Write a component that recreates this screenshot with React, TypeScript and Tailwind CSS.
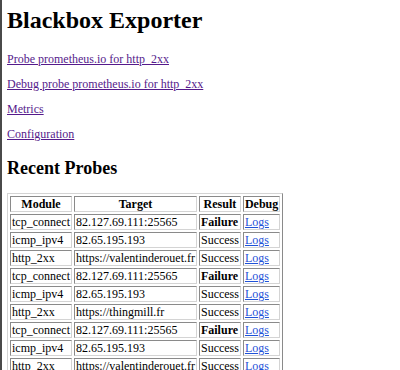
const probes = [
  { module: "tcp_connect", target: "82.127.69.111:25565", ok: false },
  { module: "icmp_ipv4", target: "82.65.195.193", ok: true },
  { module: "http_2xx", target: "https://valentinderouet.fr", ok: true },
  { module: "tcp_connect", target: "82.127.69.111:25565", ok: false },
  { module: "icmp_ipv4", target: "82.65.195.193", ok: true },
  { module: "http_2xx", target: "https://thingmill.fr", ok: true },
  { module: "tcp_connect", target: "82.127.69.111:25565", ok: false },
  { module: "icmp_ipv4", target: "82.65.195.193", ok: true },
  { module: "http_2xx", target: "https://valentinderouet.fr", ok: true },
  { module: "tcp_connect", target: "82.127.69.111:25565", ok: false },
];

const links = [
  "Probe prometheus.io for http_2xx",
  "Debug probe prometheus.io for http_2xx",
  "Metrics",
  "Configuration",
];

const cell =
  "border border-t-[#8a8a8a] border-l-[#8a8a8a] border-b-[#d4d4d4] border-r-[#d4d4d4] px-[1px] py-0 h-[16px] whitespace-nowrap";

export default function App() {
  return (
    <div
      className="min-h-[370px] border-l-2 border-[#4a4a4a] bg-white pl-[5px] text-[12px] leading-[14px] text-black"
      style={{ fontFamily: '"Liberation Serif", "Times New Roman", serif' }}
    >
      {/* Header */}
      <h1 className="pt-[6px] text-[24px] font-bold leading-[28px]">Blackbox Exporter</h1>

      {/* Links */}
      <div className="mt-[18px] flex flex-col gap-[11px]">
        {links.map((l) => (
          <p key={l} className="h-[14px]">
            <a href="#" className="text-[#551a8b] underline">
              {l}
            </a>
          </p>
        ))}
      </div>

      {/* Recent probes */}
      <h2 className="mt-[17px] text-[18px] font-bold leading-[21px]">Recent Probes</h2>

      <table className="mt-[14px] border-separate border-spacing-[2px] border border-t-[#d4d4d4] border-l-[#d4d4d4] border-b-[#8a8a8a] border-r-[#8a8a8a]">
        <thead>
          <tr>
            <th className={cell + " font-bold text-center"}>Module</th>
            <th className={cell + " font-bold text-center"}>Target</th>
            <th className={cell + " font-bold text-center"}>Result</th>
            <th className={cell + " font-bold text-center"}>Debug</th>
          </tr>
        </thead>
        <tbody>
          {probes.map((p, i) => (
            <tr key={i}>
              <td className={cell}>{p.module}</td>
              <td className={cell}>{p.target}</td>
              <td className={cell + (p.ok ? "" : " font-bold")}>{p.ok ? "Success" : "Failure"}</td>
              <td className={cell}>
                <a href="#" className="text-[#1f52d8] underline">
                  Logs
                </a>
              </td>
            </tr>
          ))}
        </tbody>
      </table>
    </div>
  );
}
